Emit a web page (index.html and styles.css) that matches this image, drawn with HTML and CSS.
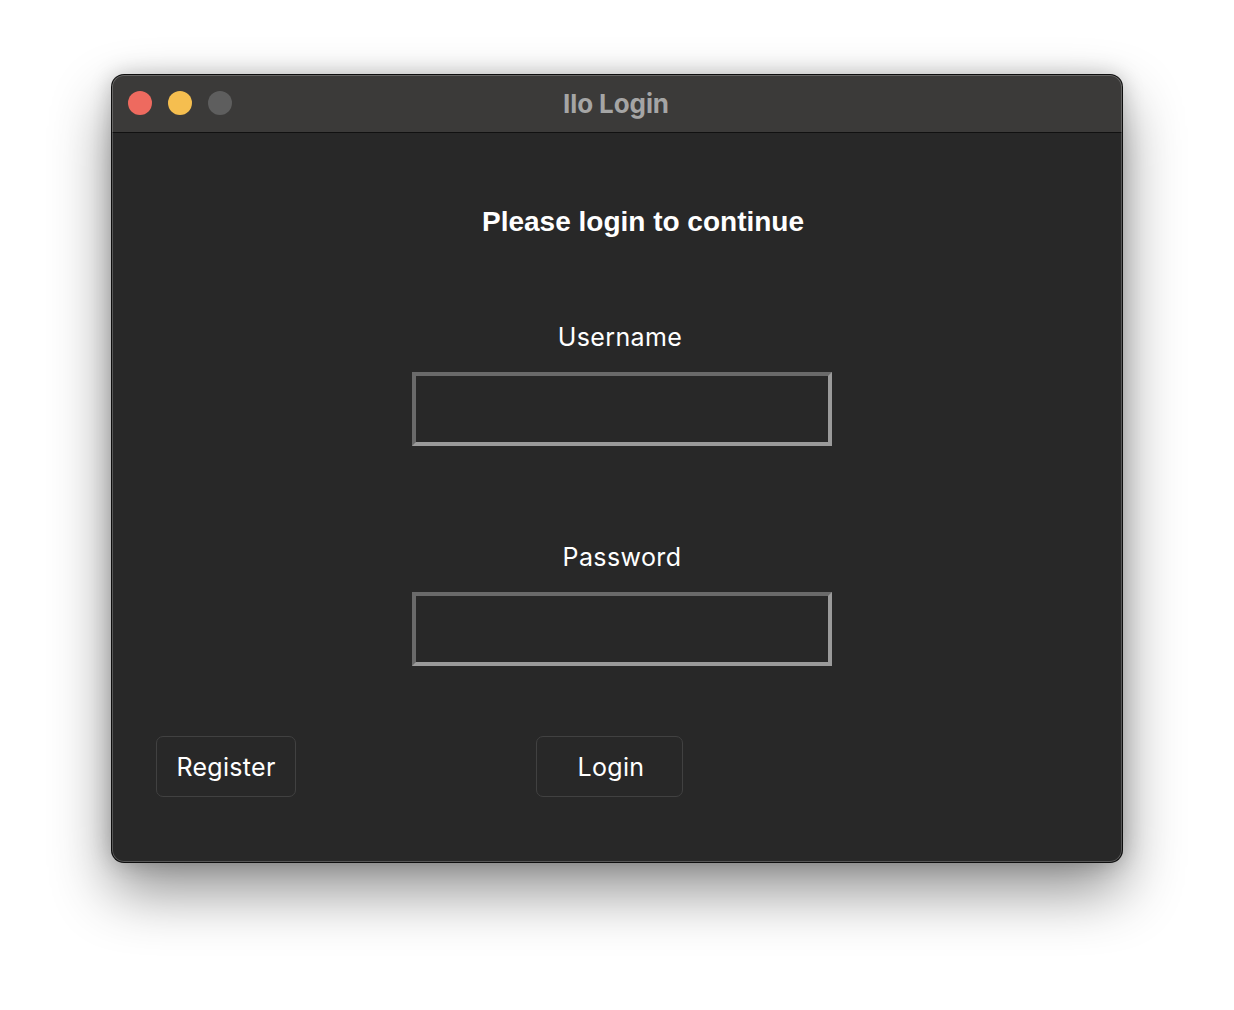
FILE: index.html
```html
<!DOCTYPE html>
<html>
<head>
<meta charset="utf-8">
<link rel="stylesheet" href="styles.css">
</head>
<body>
<div class="window">
  <div class="titlebar">
    <div class="lights">
      <span class="light red"></span>
      <span class="light yellow"></span>
      <span class="light grey"></span>
    </div>
    <div class="title">Ilo Login</div>
  </div>
  <div class="content">
    <div class="heading">Please login to continue</div>
    <div class="label label-user">Username</div>
    <div class="field"></div>
    <div class="label label-pass">Password</div>
    <div class="field"></div>
    <div class="buttons">
      <div class="btn btn-register">Register</div>
      <div class="btn btn-login">Login</div>
    </div>
  </div>
</div>
</body>
</html>
```
FILE: styles.css
```css
html, body {
  margin: 0;
  padding: 0;
  background: #ffffff;
  width: 1234px;
  height: 1010px;
  overflow: hidden;
}
.window {
  position: relative;
  margin-left: 112px;
  margin-top: 75px;
  width: 1010px;
  height: 787px;
  border-radius: 12px;
  overflow: hidden;
  background: #282828;
  box-shadow: 0 0 0 1px #0e0e0e, 0 28px 60px rgba(0,0,0,0.45), 0 0 22px rgba(0,0,0,0.22);
}
.window::after {
  content: "";
  position: absolute;
  inset: 0;
  border-radius: 12px;
  box-shadow: inset 0 0 0 1px rgba(255,255,255,0.22);
  pointer-events: none;
}
.titlebar {
  position: relative;
  height: 57px;
  background: #3b3a39;
  border-bottom: 1px solid #111111;
  display: flex;
  align-items: center;
  justify-content: center;
}
.lights {
  position: absolute;
  left: 16px;
  top: 16px;
  display: flex;
  gap: 16px;
}
.light {
  width: 24px;
  height: 24px;
  border-radius: 50%;
  display: block;
}
.red { background: #ee6a5f; }
.yellow { background: #f5be4f; }
.grey { background: #5e5e5e; }
.title {
  font-family: "Inter", "Open Sans", sans-serif;
  font-weight: 700;
  font-size: 26px;
  color: #a5a5a5;
  margin-left: -2px;
  letter-spacing: -0.1px;
}
.content {
  display: flex;
  flex-direction: column;
  color: #ffffff;
}
.heading {
  margin-top: 73px;
  padding-left: 52px;
  text-align: center;
  font-family: "Liberation Sans", Arial, sans-serif;
  font-weight: 700;
  font-size: 28px;
  line-height: 31px;
}
.label {
  font-family: "Inter", "Open Sans", sans-serif;
  font-size: 25px;
  line-height: 28px;
  letter-spacing: 0.4px;
  text-align: center;
}
.label-user {
  margin-top: 86px;
  padding-left: 6px;
}
.label-pass {
  margin-top: 97px;
  padding-left: 10px;
}
.field {
  margin-top: 21px;
  margin-left: 300px;
  width: 412px;
  height: 66px;
  border-style: solid;
  border-width: 4px;
  border-color: #6a6a6a #9a9a9a #9a9a9a #6a6a6a;
  background: #282828;
}
.buttons {
  margin-top: 70px;
  display: flex;
}
.btn {
  height: 59px;
  border: 1px solid #414141;
  border-radius: 7px;
  display: flex;
  align-items: center;
  justify-content: center;
  font-family: "Inter", "Open Sans", sans-serif;
  font-size: 25px;
  letter-spacing: 0.3px;
  color: #ffffff;
}
.btn-register {
  margin-left: 44px;
  width: 138px;
}
.btn-login {
  margin-left: 240px;
  width: 142px;
  padding-left: 3px;
}
```
